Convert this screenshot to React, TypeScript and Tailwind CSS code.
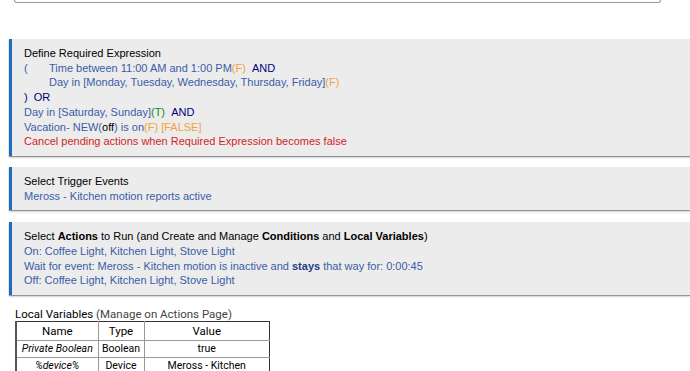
import React from "react";

const B = "text-[#3a5ca8]";
const N = "text-[#000080]";
const O = "text-[#f2a33a]";
const G = "text-[#138a13]";
const R = "text-[#d11f26]";

function Panel({ children }: { children: React.ReactNode }) {
  return (
    <div className="ml-[9px] border-l-[3px] border-[#1c6cc0] bg-[#ececec] pl-[12px] pt-[7px] pb-[7px] shadow-[0_1px_1px_rgba(0,0,0,0.35),0_2px_2px_rgba(0,0,0,0.12)] text-[11px] leading-[14.7px] text-black">
      {children}
    </div>
  );
}

export default function App() {
  return (
    <div className="w-[690px] h-[371px] overflow-hidden bg-white" style={{ fontFamily: '"Liberation Sans", Arial, sans-serif' }}>
      <div className="ml-[14px] w-[647px] h-[3px] border-x border-b border-[#9a9a9a] rounded-b-[3px]" />
      <div className="h-[36px]" />
      <Panel>
        <div>Define Required Expression</div>
        <div className="flex">
          <span className={`${B} w-[25px]`}>(</span>
          <span className={B}>Time between 11:00 AM and 1:00 PM<span className={O}>(F)</span> <span className={N}>&nbsp;AND</span></span>
        </div>
        <div className={`${B} pl-[25px]`}>Day in [Monday, Tuesday, Wednesday, Thursday, Friday]<span className={O}>(F)</span></div>
        <div className={N}>)&nbsp; OR</div>
        <div className={B}>Day in [Saturday, Sunday]<span className={G}>(T)</span> <span className={N}>&nbsp;AND</span></div>
        <div className={B}>Vacation- NEW(<span className="text-black">off</span>) is on<span className={O}>(F) [FALSE]</span></div>
        <div className={R}>Cancel pending actions when Required Expression becomes false</div>
      </Panel>
      <div className="h-[11px]" />
      <Panel>
        <div>Select Trigger Events</div>
        <div className={B}>Meross - Kitchen motion reports active</div>
      </Panel>
      <div className="h-[12px]" />
      <Panel>
        <div>Select <b>Actions</b> to Run (and Create and Manage <b>Conditions</b> and <b>Local Variables</b>)</div>
        <div className={B}>On: Coffee Light, Kitchen Light, Stove Light</div>
        <div className={B}>Wait for event: Meross - Kitchen motion is inactive and <b className="text-[#243c8c]">stays</b> that way for: 0:00:45</div>
        <div className={B}>Off: Coffee Light, Kitchen Light, Stove Light</div>
      </Panel>
      <div className="ml-[15px] mt-[12px]" style={{ fontFamily: 'Roboto, "Noto Sans", sans-serif' }}>
        <div className="text-[11.5px] leading-[14px] text-black">
          Local Variables <span className="text-[#444]">(Manage on Actions Page)</span>
        </div>
        <table className="w-[255px] table-fixed border-collapse text-black border-t border-r border-b border-[#333] border-l-2 border-l-[#555]">
          <thead>
            <tr className="h-[19px] text-[11.5px]">
              <th className="w-[82px] font-normal border-r border-b border-[#999]">Name</th>
              <th className="w-[46px] font-normal border-r border-b border-[#999]">Type</th>
              <th className="font-normal border-b border-[#999]">Value</th>
            </tr>
          </thead>
          <tbody className="text-[10.5px]">
            <tr className="h-[16px]">
              <td className="text-center italic whitespace-nowrap border-r border-b border-[#999]">Private Boolean</td>
              <td className="text-center border-r border-b border-[#999]">Boolean</td>
              <td className="text-center border-b border-[#999]">true</td>
            </tr>
            <tr className="h-[16px]">
              <td className="text-center italic border-r border-[#999]">%device%</td>
              <td className="text-center border-r border-[#999]">Device</td>
              <td className="text-center">Meross - Kitchen</td>
            </tr>
          </tbody>
        </table>
      </div>
    </div>
  );
}
